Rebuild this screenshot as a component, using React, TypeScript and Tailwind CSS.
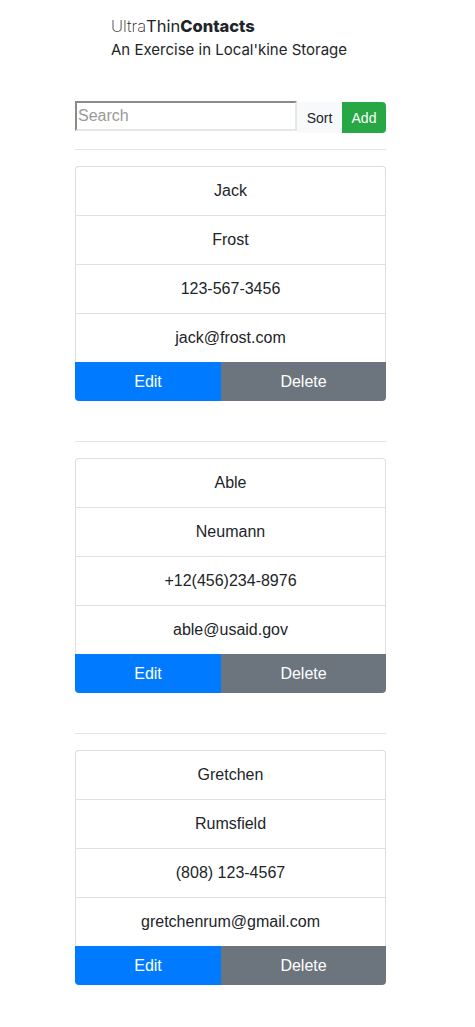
import React from "react";

interface Contact {
  first: string;
  last: string;
  phone: string;
  email: string;
}

const CONTACTS: Contact[] = [
  { first: "Jack", last: "Frost", phone: "123-567-3456", email: "jack@frost.com" },
  { first: "Able", last: "Neumann", phone: "+12(456)234-8976", email: "able@usaid.gov" },
  { first: "Gretchen", last: "Rumsfield", phone: "(808) 123-4567", email: "gretchenrum@gmail.com" },
];

function ContactCard({ c }: { c: Contact }) {
  const fields = [c.first, c.last, c.phone, c.email];
  return (
    <div>
      <div className="rounded-t border border-b-0 border-[#dfdfdf]">
        {fields.map((f, i) => (
          <div
            key={i}
            className={`flex items-center justify-center text-base text-[#212529] ${
              i > 0 ? "h-[49px] border-t border-[#dfdfdf]" : "h-[48px]"
            }`}
          >
            {f}
          </div>
        ))}
      </div>
      <div className="flex h-[39px] overflow-hidden rounded-b text-base text-white">
        <button className="flex w-[146px] items-center justify-center bg-[#007bff]">Edit</button>
        <button className="flex flex-1 items-center justify-center bg-[#6c757d]">Delete</button>
      </div>
    </div>
  );
}

export default function App() {
  return (
    <div className="min-h-screen bg-white font-['Liberation_Sans',Arial,sans-serif]">
      <div className="ml-[75px] w-[311px] pt-[15px]">
        {/* Header */}
        <div className="pl-[36px] font-['Inter',sans-serif] text-[#212529]">
          <div className="text-[16.5px] leading-[22px]">
            <span className="font-extralight">Ultra</span>
            <span className="font-normal">Thin</span>
            <span className="font-extrabold">Contacts</span>
          </div>
          <div className="text-[15px] leading-[25px]">An Exercise in Local'kine Storage</div>
        </div>

        {/* Controls */}
        <div className="mt-[39px] flex items-stretch">
          <input
            type="text"
            placeholder="Search"
            className="h-[30px] w-[222px] border-2 border-t-[#8a8a8a] border-l-[#8a8a8a] border-r-[#e6e6e6] border-b-[#e6e6e6] px-[1px] text-base text-[#212529] placeholder-[#9a9a9a] outline-none"
          />
          <div className="flex">
            <button className="mt-[1px] h-[31px] w-[45px] bg-[#f8f9fa] text-sm text-[#212529]">Sort</button>
            <button className="mt-[1px] h-[31px] w-[44px] rounded-r bg-[#28a745] text-sm text-white">Add</button>
          </div>
        </div>

        {CONTACTS.map((c, i) => (
          <div key={i}>
            <hr className={`${i === 0 ? "mt-[16px]" : "mt-[40px]"} border-t border-[#e5e5e5]`} />
            <div className="mt-[16px]">
              <ContactCard c={c} />
            </div>
          </div>
        ))}
      </div>
    </div>
  );
}
